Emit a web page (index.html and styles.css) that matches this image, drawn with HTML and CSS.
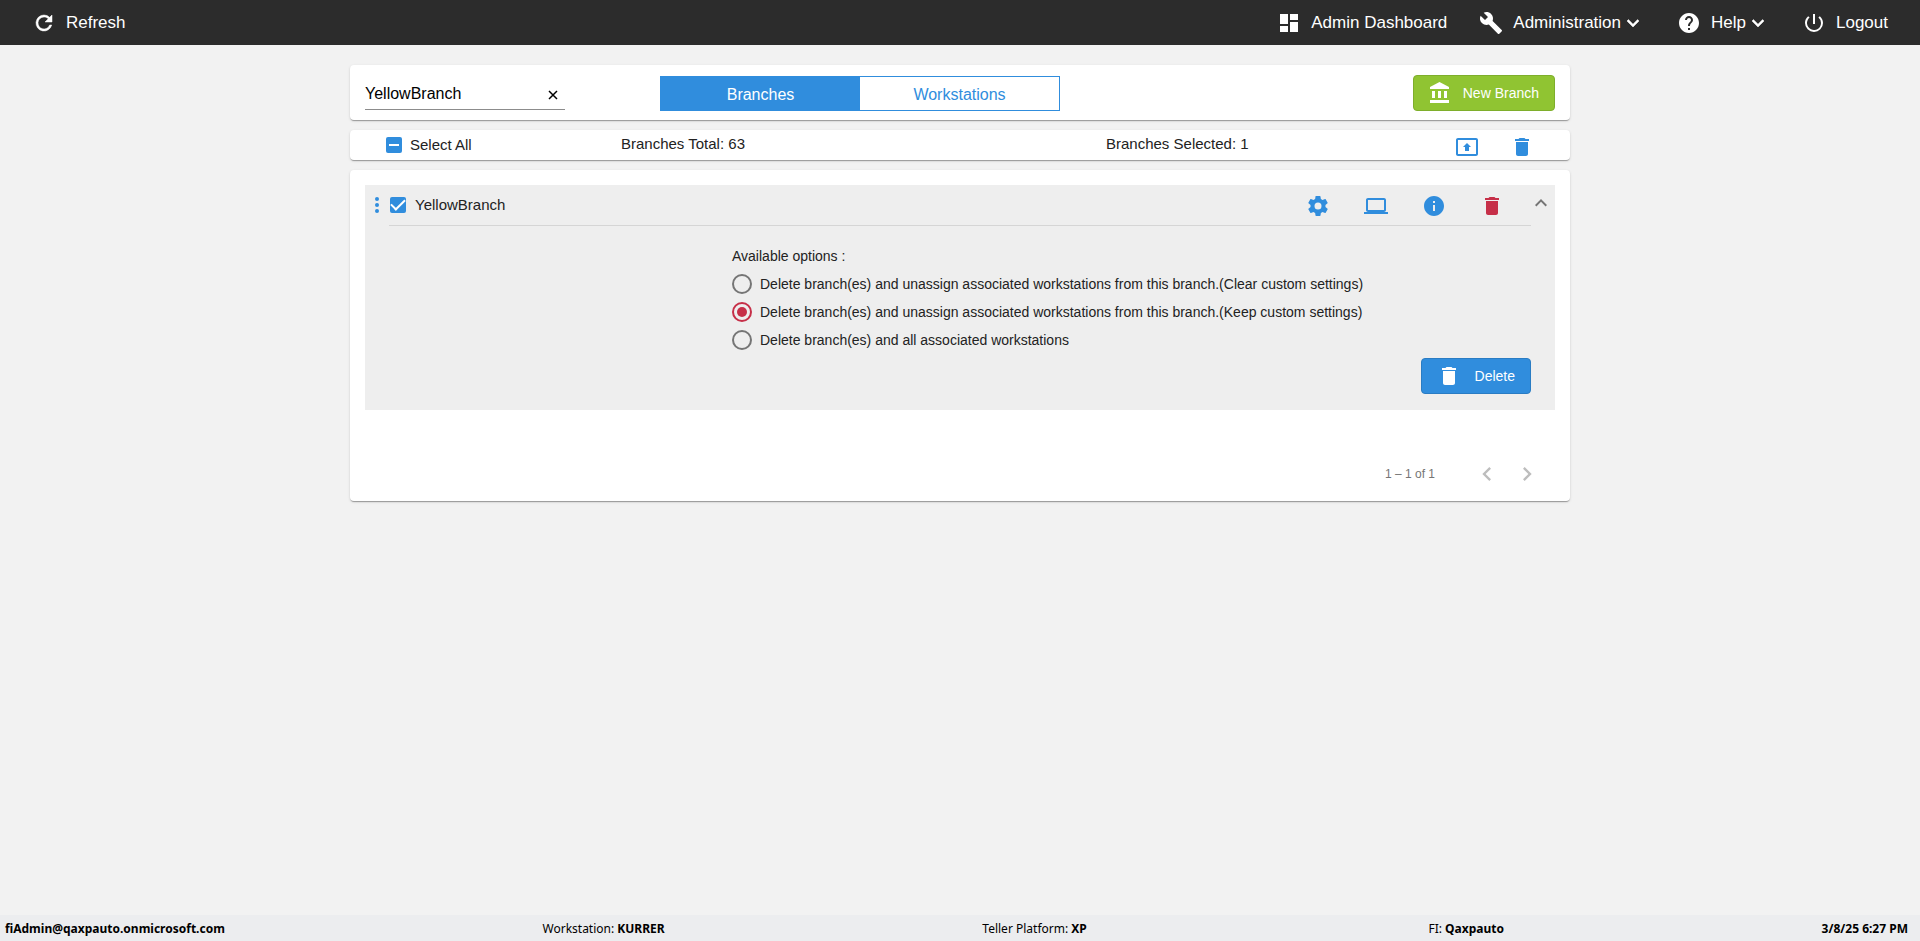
FILE: index.html
```html
<!DOCTYPE html>
<html lang="en">

<head>
    <meta charset="UTF-8">
    <meta name="viewport" content="width=device-width, initial-scale=1.0">
    <title>Branches</title>
    <link rel="stylesheet" href="styles.css">
</head>

<body>

    <!-- Top Bar -->
    <header class="topbar">
        <button class="topbar-item" type="button">
            <svg class="icon" viewBox="0 0 24 24"><path d="M17.65 6.35A7.96 7.96 0 0 0 12 4a8 8 0 1 0 7.73 10h-2.08A6 6 0 1 1 12 6c1.66 0 3.14.69 4.22 1.78L13 11h7V4l-2.35 2.35z" stroke="currentColor" stroke-width=".5"/></svg>
            Refresh
        </button>
        <nav class="topbar-nav">
            <a class="topbar-item" href="#">
                <svg class="icon" viewBox="0 0 24 24"><path d="M3 13h8V3H3v10zm0 8h8v-6H3v6zm10 0h8V11h-8v10zm0-18v6h8V3h-8z"/></svg>
                Admin Dashboard
            </a>
            <button class="topbar-item" type="button">
                <svg class="icon" viewBox="0 0 24 24"><path d="M22.7 19l-9.1-9.1c.9-2.3.4-5-1.5-6.9-2-2-5-2.4-7.4-1.3L9 6 6 9 1.6 4.7C.4 7.1.9 10.1 2.9 12.1c1.9 1.9 4.6 2.4 6.9 1.5l9.1 9.1c.4.4 1 .4 1.4 0l2.3-2.3c.5-.4.5-1.1.1-1.4z"/></svg>
                <span class="menu-label">Administration<svg class="icon" viewBox="0 0 24 24"><path d="M7.41 8.59L12 13.17l4.59-4.58L18 10l-6 6-6-6 1.41-1.41z" stroke="currentColor" stroke-width=".5"/></svg></span>
            </button>
            <button class="topbar-item" type="button">
                <svg class="icon" viewBox="0 0 24 24"><path d="M12 2C6.48 2 2 6.48 2 12s4.48 10 10 10 10-4.48 10-10S17.52 2 12 2zm1 17h-2v-2h2v2zm2.07-7.75l-.9.92C13.45 12.9 13 13.5 13 15h-2v-.5c0-1.1.45-2.1 1.17-2.83l1.24-1.26c.37-.36.59-.86.59-1.41 0-1.1-.9-2-2-2s-2 .9-2 2H8c0-2.21 1.79-4 4-4s4 1.79 4 4c0 .88-.36 1.68-.93 2.25z"/></svg>
                <span class="menu-label">Help<svg class="icon" viewBox="0 0 24 24"><path d="M7.41 8.59L12 13.17l4.59-4.58L18 10l-6 6-6-6 1.41-1.41z" stroke="currentColor" stroke-width=".5"/></svg></span>
            </button>
            <button class="topbar-item" type="button">
                <svg class="icon" viewBox="0 0 24 24"><path d="M13 3h-2v10h2V3zm4.83 2.17l-1.42 1.42A6.92 6.92 0 0 1 19 12a7 7 0 1 1-11.42-5.42L6.17 5.17A8.93 8.93 0 0 0 3 12a9 9 0 0 0 18 0c0-2.74-1.23-5.18-3.17-6.83z"/></svg>
                Logout
            </button>
        </nav>
    </header>

    <main class="content">

        <!-- Search and Tabs -->
        <section class="card toolbar">
            <div class="search">
                <input type="text" value="YellowBranch" aria-label="Search branches">
                <button class="clear-btn" type="button" aria-label="Clear">
                    <svg viewBox="0 0 10 10"><path d="M1 1l8 8M9 1l-8 8"/></svg>
                </button>
            </div>
            <div class="tabs">
                <button class="tab active" type="button">Branches</button>
                <button class="tab" type="button">Workstations</button>
            </div>
            <button class="btn btn-new" type="button">
                <svg class="icon" viewBox="0 0 24 24"><path d="M4 10v7h3v-7H4zm6 0v7h3v-7h-3zM2 22h19v-3H2v3zm14-12v7h3v-7h-3zm-4.5-9L2 6v2h19V6l-9.5-5z"/></svg>
                New Branch
            </button>
        </section>

        <!-- Selection Summary -->
        <section class="card summary">
            <label class="check-label"><input class="check partial" type="checkbox">Select All</label>
            <span class="total">Branches Total: 63</span>
            <span class="selected">Branches Selected: 1</span>
            <div class="summary-actions">
                <button class="icon-btn" type="button" aria-label="Move selected">
                    <svg class="icon" viewBox="0 0 24 24"><path d="M21 3H3c-1.1 0-2 .9-2 2v14c0 1.1.9 2 2 2h18c1.1 0 2-.9 2-2V5c0-1.1-.9-2-2-2zm0 16H3V5h18v14zM10 12H8l4-4 4 4h-2v4h-4v-4z"/></svg>
                </button>
                <button class="icon-btn" type="button" aria-label="Delete selected">
                    <svg class="icon" viewBox="0 0 24 24"><path d="M6 19c0 1.1.9 2 2 2h8c1.1 0 2-.9 2-2V7H6v12zM19 4h-3.5l-1-1h-5l-1 1H5v2h14V4z"/></svg>
                </button>
            </div>
        </section>

        <!-- Branch List -->
        <section class="card list">
            <article class="branch">
                <div class="branch-head">
                    <button class="icon-btn more" type="button" aria-label="More">
                        <svg class="icon" viewBox="0 0 24 24"><circle cx="12" cy="6" r="2"/><circle cx="12" cy="12" r="2"/><circle cx="12" cy="18" r="2"/></svg>
                    </button>
                    <div class="branch-title">
                        <label class="check-label"><input class="check" type="checkbox" checked>YellowBranch</label>
                        <div class="branch-actions">
                            <button class="icon-btn" type="button" aria-label="Settings">
                                <svg class="icon" viewBox="0 0 24 24"><path d="M19.43 12.98c.04-.32.07-.64.07-.98s-.03-.66-.07-.98l2.11-1.65c.19-.15.24-.42.12-.64l-2-3.46c-.12-.22-.39-.3-.61-.22l-2.49 1c-.52-.4-1.08-.73-1.69-.98l-.38-2.65A.49.49 0 0 0 14 2h-4c-.25 0-.46.18-.49.42l-.38 2.65c-.61.25-1.17.59-1.69.98l-2.49-1c-.23-.09-.49 0-.61.22l-2 3.46c-.13.22-.07.49.12.64l2.11 1.65c-.04.32-.07.65-.07.98s.03.66.07.98l-2.11 1.65c-.19.15-.24.42-.12.64l2 3.46c.12.22.39.3.61.22l2.49-1c.52.4 1.08.73 1.69.98l.38 2.65c.03.24.24.42.49.42h4c.25 0 .46-.18.49-.42l.38-2.65c.61-.25 1.17-.59 1.69-.98l2.49 1c.23.09.49 0 .61-.22l2-3.46c.12-.22.07-.49-.12-.64l-2.11-1.65zM12 15.5a3.5 3.5 0 1 1 0-7 3.5 3.5 0 0 1 0 7z"/></svg>
                            </button>
                            <button class="icon-btn" type="button" aria-label="Workstations">
                                <svg class="icon" viewBox="0 0 24 24"><path d="M20 18c1.1 0 2-.9 2-2V6c0-1.1-.9-2-2-2H4c-1.1 0-2 .9-2 2v10c0 1.1.9 2 2 2H0v2h24v-2h-4zM4 6h16v10H4V6z"/></svg>
                            </button>
                            <button class="icon-btn" type="button" aria-label="Info">
                                <svg class="icon" viewBox="0 0 24 24"><path d="M12 2C6.48 2 2 6.48 2 12s4.48 10 10 10 10-4.48 10-10S17.52 2 12 2zm1 15h-2v-6h2v6zm0-8h-2V7h2v2z"/></svg>
                            </button>
                            <button class="icon-btn danger" type="button" aria-label="Delete branch">
                                <svg class="icon" viewBox="0 0 24 24"><path d="M6 19c0 1.1.9 2 2 2h8c1.1 0 2-.9 2-2V7H6v12zM19 4h-3.5l-1-1h-5l-1 1H5v2h14V4z"/></svg>
                            </button>
                        </div>
                    </div>
                    <button class="icon-btn collapse" type="button" aria-label="Collapse">
                        <svg class="icon" viewBox="0 0 24 24"><path d="M12 8l-6 6 1.41 1.41L12 10.83l4.59 4.58L18 14z"/></svg>
                    </button>
                </div>

                <fieldset class="options">
                    <legend>Available options :</legend>
                    <label><input type="radio" name="delete-option">Delete branch(es) and unassign associated workstations from this branch.(Clear custom settings)</label>
                    <label><input type="radio" name="delete-option" checked>Delete branch(es) and unassign associated workstations from this branch.(Keep custom settings)</label>
                    <label><input type="radio" name="delete-option">Delete branch(es) and all associated workstations</label>
                </fieldset>

                <div class="branch-footer">
                    <button class="btn btn-delete" type="button">
                        <svg class="icon" viewBox="0 0 24 24"><path d="M6 19c0 1.1.9 2 2 2h8c1.1 0 2-.9 2-2V7H6v12zM19 4h-3.5l-1-1h-5l-1 1H5v2h14V4z"/></svg>
                        Delete
                    </button>
                </div>
            </article>

            <div class="paginator">
                <span class="range">1 – 1 of 1</span>
                <button class="page-btn" type="button" aria-label="Previous page" disabled>
                    <svg viewBox="0 0 24 24"><path d="M15.41 7.41L14 6l-6 6 6 6 1.41-1.41L10.83 12z"/></svg>
                </button>
                <button class="page-btn" type="button" aria-label="Next page" disabled>
                    <svg viewBox="0 0 24 24"><path d="M10 6L8.59 7.41 13.17 12l-4.58 4.59L10 18l6-6z"/></svg>
                </button>
            </div>
        </section>

    </main>

    <!-- Status Bar -->
    <footer class="statusbar">
        <span><b>fiAdmin@qaxpauto.onmicrosoft.com</b></span>
        <span>Workstation: <b>KURRER</b></span>
        <span>Teller Platform: <b>XP</b></span>
        <span class="institution">FI: <b>Qaxpauto</b></span>
        <span><b>3/8/25 6:27 PM</b></span>
    </footer>

    <script>
        // "Select All" shows a dash while only some branches are selected
        document.querySelector(".check.partial").indeterminate = true;
    </script>

</body>

</html>
```
FILE: styles.css
```css
* {
    margin: 0;
    padding: 0;
    box-sizing: border-box;
}

body {
    display: flex;
    flex-direction: column;
    min-height: 100vh;
    font-family: "Liberation Sans", Arial, sans-serif;
    font-size: 15px;
    color: #222;
    background-color: #f2f2f2;
}

button,
input {
    font: inherit;
    color: inherit;
}

button {
    border: none;
    background: none;
    cursor: pointer;
}

.icon {
    display: block;
    flex: none;
    width: 24px;
    height: 24px;
    fill: currentColor;
}

/* Top Bar */
.topbar {
    display: flex;
    justify-content: space-between;
    align-items: center;
    height: 45px;
    padding: 0 32px;
    background-color: #2c2c2c;
    color: #fff;
    font-size: 17px;
}

.topbar-nav {
    display: flex;
    gap: 32px;
}

.topbar-item {
    display: flex;
    align-items: center;
    gap: 10px;
    color: #fff;
    text-decoration: none;
}

.menu-label {
    display: flex;
    align-items: center;
}

/* Cards */
.content {
    display: flex;
    flex-direction: column;
    gap: 10px;
    flex: 1;
    width: 100%;
    max-width: 1220px;
    margin: 20px auto;
}

.card {
    background-color: #fff;
    border-radius: 4px;
    box-shadow: 0 2px 1px -1px rgba(0, 0, 0, 0.2), 0 1px 1px rgba(0, 0, 0, 0.14), 0 1px 3px rgba(0, 0, 0, 0.12);
}

/* Search and Tabs */
.toolbar {
    display: grid;
    grid-template-columns: 295px 400px 1fr;
    align-items: center;
    padding: 10px 15px 9px;
}

.search {
    display: flex;
    align-items: center;
    width: 200px;
    height: 34px;
    border-bottom: 1px solid #8c8c8c;
    color: #000;
    font-size: 16px;
}

.search input {
    flex: 1;
    min-width: 0;
    height: 26px;
    padding-top: 2px;
    border: none;
    outline: none;
    background: none;
}

.clear-btn {
    padding: 6px 7px 2px;
}

.clear-btn svg {
    display: block;
    width: 10px;
    height: 10px;
    fill: none;
    stroke: #000;
    stroke-width: 1.5;
}

.tabs {
    display: flex;
    border: 1px solid #308ddd;
}

.tab {
    flex: 1;
    height: 33px;
    padding-top: 3px;
    color: #308ddd;
    font-size: 16px;
}

.tab.active {
    background-color: #308ddd;
    color: #fff;
}

.btn {
    display: flex;
    align-items: center;
    height: 36px;
    padding: 0 15px;
    border: 1px solid;
    border-radius: 4px;
    color: #fff;
    font-size: 14px;
}

.btn-new {
    gap: 11px;
    justify-self: end;
    padding-left: 14px;
    border-color: #7eae2b;
    background-color: #90c432;
}

.btn-delete {
    gap: 14px;
    border-color: #2a7cc3;
    background-color: #308ddd;
}

/* Selection Summary */
.summary {
    display: grid;
    grid-template-columns: 235px 485px 1fr auto;
    align-items: center;
    height: 30px;
    padding: 0 36px;
}

.total,
.selected {
    padding-bottom: 4px;
}

.summary-actions {
    display: flex;
    gap: 31px;
    padding-top: 4px;
}

.check-label {
    display: flex;
    align-items: center;
    gap: 8px;
    line-height: 16px;
}

.check {
    appearance: none;
    display: grid;
    place-content: center;
    width: 16px;
    height: 16px;
    border-radius: 2px;
    background-color: #308ddd;
}

.check:checked::before {
    content: "";
    width: 12px;
    height: 6px;
    margin-bottom: 4px;
    border: solid #fff;
    border-width: 0 0 2px 2px;
    transform: rotate(-45deg);
}

.check:indeterminate::before {
    content: "";
    width: 10px;
    height: 2px;
    background-color: #fff;
}

.icon-btn {
    display: block;
    color: #308ddd;
}

.danger {
    color: #c62f48;
}

/* Branch List */
.list {
    padding: 15px 15px 7px;
}

.branch {
    background-color: #eee;
    padding-bottom: 16px;
}

.branch-head {
    display: flex;
}

.more {
    padding-bottom: 1px;
}

.branch-title {
    display: flex;
    justify-content: space-between;
    flex: 1;
    height: 41px;
    border-bottom: 1px solid #d5d5d5;
}

.branch-title .check-label {
    gap: 9px;
    padding: 0 1px;
}

.branch-actions {
    display: flex;
    align-items: center;
    gap: 34px;
    padding: 2px 27px 0 0;
}

.collapse {
    align-self: flex-start;
    width: 24px;
    padding-top: 6px;
    color: #757575;
}

.collapse .icon {
    margin-left: -2px;
}

.options {
    display: flex;
    flex-direction: column;
    align-items: flex-start;
    padding: 22px 0 4px 367px;
    border: none;
    font-size: 14px;
}

.options legend {
    float: left;
    height: 22px;
}

.options label {
    display: flex;
    align-items: center;
    gap: 8px;
    height: 28px;
}

.options input {
    appearance: none;
    display: grid;
    place-content: center;
    width: 20px;
    height: 20px;
    border: 2px solid #757575;
    border-radius: 50%;
}

.options input:checked {
    border-color: #c62f48;
}

.options input:checked::before {
    content: "";
    width: 10px;
    height: 10px;
    border-radius: 50%;
    background-color: #c62f48;
}

.branch-footer {
    display: flex;
    justify-content: flex-end;
    padding-right: 24px;
}

.paginator {
    display: flex;
    align-items: center;
    justify-content: flex-end;
    height: 40px;
    margin-top: 44px;
    padding-right: 8px;
    color: #757575;
    font-size: 12px;
}

.range {
    margin-right: 32px;
}

.page-btn {
    width: 40px;
    padding: 6px;
}

.page-btn svg {
    display: block;
    width: 28px;
    height: 28px;
    fill: #bdbdbd;
}

/* Status Bar */
.statusbar {
    display: flex;
    justify-content: space-between;
    align-items: center;
    height: 26px;
    padding: 0 12px 0 5px;
    background-color: #ecedef;
    color: #000;
    font-family: "Segoe UI", "Noto Sans", sans-serif;
    font-size: 12px;
}

.institution {
    padding-left: 24px;
}
```
